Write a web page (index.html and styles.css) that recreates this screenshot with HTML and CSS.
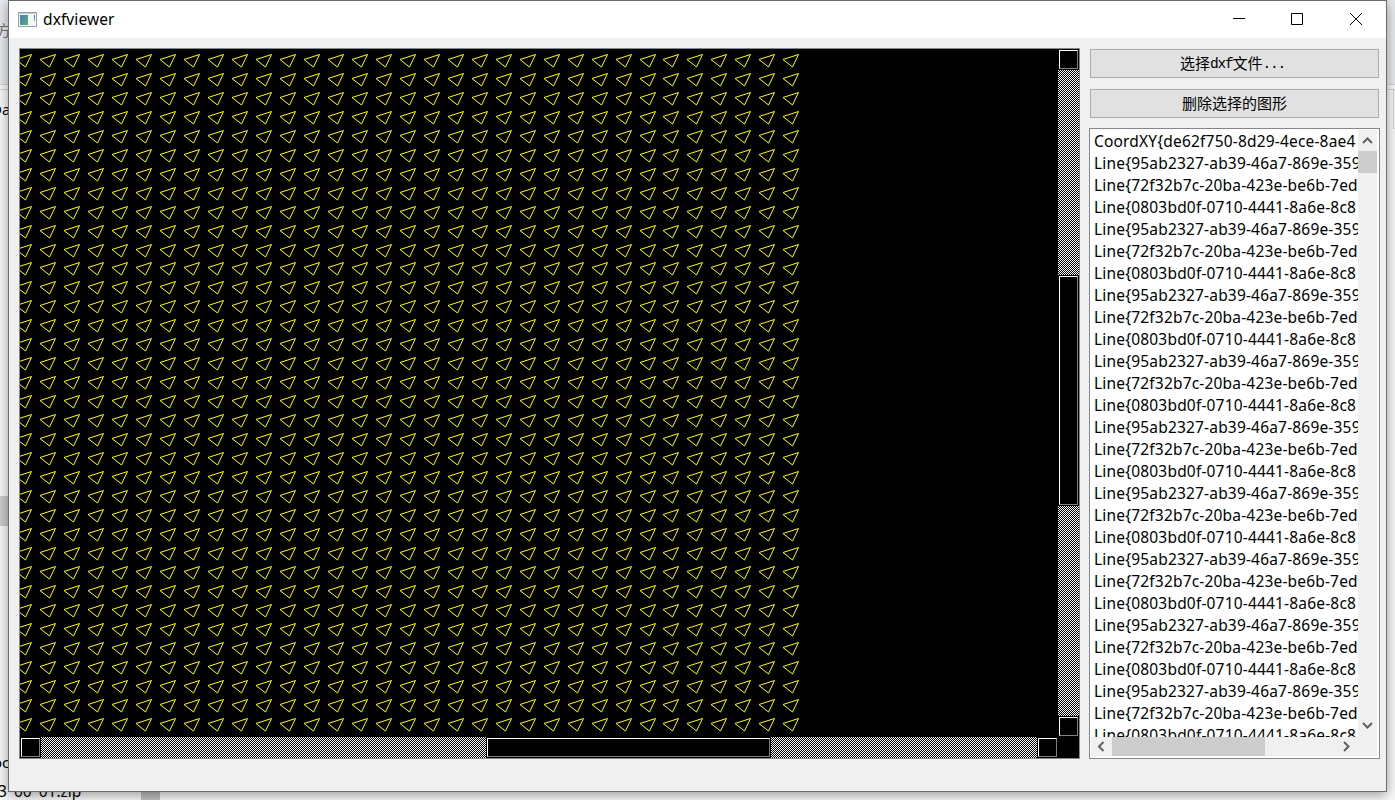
FILE: index.html
```html
<!DOCTYPE html>
<html lang="zh">
<head>
<meta charset="utf-8">
<title>dxfviewer</title>
<link rel="stylesheet" href="styles.css">
</head>
<body>
<div class="desktop">
  <div class="back-top"></div>
  <div class="back-line"></div>
  <div class="back-thumb"></div>
  <div class="back-foot"></div>
  <div class="back-box"></div>
  <span class="back-text t1">方</span>
  <span class="back-text t2">Da</span>
  <span class="back-text t3">oc</span>
  <span class="back-text t4">3 00 01.zip</span>
  <main class="window">
    <header class="titlebar">
      <svg class="app-icon" width="19" height="15" viewBox="0 0 19 15"><defs><linearGradient id="g" x1="0" y1="0" x2="1" y2="1"><stop offset="0" stop-color="#4a7fb0"/><stop offset="1" stop-color="#55b077"/></linearGradient></defs><rect x=".5" y=".5" width="18" height="14" fill="#f4f6f7" stroke="#9aa1a8"/><path d="M1 1.5h17" stroke="#c3cad0"/><rect x="2" y="3" width="8" height="10" fill="url(#g)"/><path d="M16.5 3v3" stroke="#3f7fc0"/><path d="M16.5 6v3" stroke="#62b584"/></svg>
      <h1>dxfviewer</h1>
      <svg class="caption" width="132" height="14" viewBox="0 0 132 14" fill="none" stroke="#000"><path d="M1 6.5h12M59.500 1.500h11v11h-11z"/><path d="M118 1l12 12M130 1l-12 12"/></svg>
    </header>
    <div class="content">
      <section class="view">
        <svg class="drawing" width="1038" height="688"><path id="shapes" fill="none" stroke="#ff0"/></svg>
        <div class="bar vertical"><i class="knob box"></i><i class="knob thumb-v"></i><i class="knob box"></i></div>
        <div class="bar horizontal"><i class="knob box"></i><i class="knob thumb-h"></i><i class="knob box end"></i></div>
        <div class="corner"></div>
      </section>
      <aside class="side">
        <button>选择<span class="half">dxf</span>文件<span class="half">...</span></button>
        <button>删除选择的图形</button>
        <div class="list">
          <ul id="items"></ul>
          <div class="sv"><svg width="19" height="21" viewBox="0 0 19 21"><path d="M5 13l4.500-4.500 4.500 4.500"/></svg><i></i><svg class="end" width="19" height="20" viewBox="0 0 19 20"><path d="M5 6l4.500 4.500 4.500-4.500"/></svg></div>
          <div class="sh"><svg width="21" height="19" viewBox="0 0 21 19"><path d="M12.500 5l-4.500 4.500 4.500 4.500"/></svg><i></i><svg class="end" width="21" height="19" viewBox="0 0 21 19"><path d="M7 5l4.500 4.500-4.500 4.500"/></svg></div>
        </div>
      </aside>
    </div>
  </main>
</div>
<script src="app.js"></script>
</body>
</html>
```
FILE: styles.css
```css
* { box-sizing: border-box; }
body { margin: 0; font-family: "Noto Sans", "Noto Sans CJK SC", sans-serif; font-size: 15px; color: #000; }
.desktop { position: relative; width: 1395px; height: 800px; overflow: hidden; background: #fafafa; }
.back-top { position: absolute; inset: 0 0 auto; height: 84px; background: #e8ebef; }
.back-line { position: absolute; left: 0; top: 84px; width: 100%; height: 6px; border: solid #d5d5d5; border-width: 1px 0; }
.back-thumb { position: absolute; left: 0; top: 496px; width: 9px; height: 30px; background: #cdcdcd; }
.back-foot { position: absolute; left: 141px; top: 780px; width: 19px; height: 20px; background: #c2c2c2; }
.back-box { position: absolute; left: 1393px; top: 90px; width: 10px; height: 39px; border: 1px solid #d0d0d0; }
.back-text { position: absolute; line-height: 20px; white-space: nowrap; }
.t1 { left: -4px; top: 20px; color: #777; }
.t2 { left: -9px; top: 99px; }
.t3 { left: -7px; top: 752px; }
.t4 { left: -2px; top: 781px; font-size: 15.500px; word-spacing: 3px; }
.window { position: relative; margin-left: 8px; width: 1379px; height: 792px; border: 1px solid #6b6c6e; background: #f0f0f0; box-shadow: 0 3px 12px rgba(0,0,0,.4); }
.titlebar { display: flex; align-items: center; height: 37px; padding: 0 22px 0 9px; background: #fff; }
.titlebar h1 { margin: 0 0 2px 6px; font-size: 15.500px; font-weight: 400; line-height: 20px; letter-spacing: .1px; }
.app-icon { margin-bottom: 1px; }
.caption { margin: 0 0 1px auto; }
.content { display: flex; gap: 9px; padding: 10px 6px 0 10px; }
.view { display: grid; grid-template: 688px 21px / 1038px 21px; width: 1061px; height: 711px; border: 1px solid #828790; background: #000; }
.drawing { display: block; }
.bar { display: flex; background: repeating-conic-gradient(#fff 0 25%, #000 0 50%) 0 0 / 2px 2px; }
.vertical { flex-direction: column; justify-content: space-between; }
.knob { display: block; background: #000; border: 1px solid; border-color: #fff #808080 #808080 #fff; box-shadow: 0 0 0 1px #000; }
.box { width: 19px; height: 19px; margin: 1px; }
.thumb-v { width: 19px; height: 229px; margin: 0 1px 6px; }
.thumb-h { width: 283px; height: 19px; margin: 1px 0 1px 446px; }
.box.end { margin-left: auto; }
.corner { background: #000; }
.side { width: 291px; }
.side button { display: flex; align-items: center; justify-content: center; width: 289px; height: 29px; margin: 1px 0 11px 1px; padding: 0 0 2px; background: #e1e1e1; border: 1px solid #adadad; border-radius: 0; font: 15px/20px "Noto Sans CJK SC", sans-serif; font-weight: 400; color: #000; }
.side button:first-child { padding-right: 4px; }
.side button + button { margin-bottom: 10px; }
.half { padding-top: 2px; font: 14.500px/20px "Liberation Mono", monospace; letter-spacing: -1.200px; }
.list { display: grid; grid-template: 607px 19px / 267px 19px; height: 631px; padding: 1px; border: 1px solid #828790; background: #fff; }
.list ul { margin: 0; padding: 0 0 0 3px; list-style: none; overflow: hidden; font-size: 15.500px; letter-spacing: .18px; }
.list li { height: 22px; line-height: 22px; white-space: nowrap; }
.list svg { display: block; fill: none; stroke: #606060; stroke-width: 2; }
.sv { display: flex; flex-direction: column; background: #f0f0f0; }
.sv i { height: 22px; background: #cdcdcd; }
.sh { display: flex; grid-column: 1 / 3; background: #f0f0f0; }
.sh i { width: 153px; background: #cdcdcd; }
.sv .end { margin-top: auto; }
.sh .end { margin-left: auto; margin-right: 19px; }
```
FILE: app.js
```js
let d = "";
for (let r = 0; r < 36; r++) {
  for (let c = 0; c < 33; c++) {
    const x = Math.round(11.3 + c * 23.97) + 0.5;
    const y = Math.round(4.8 + r * 18.97) + 0.5;
    d += `M${x} ${y}l-15.5 5l9.5 7.500z`;
  }
}
document.getElementById("shapes").setAttribute("d", d);

const ids = ["95ab2327-ab39-46a7-869e-359", "72f32b7c-20ba-423e-be6b-7ed", "0803bd0f-0710-4441-8a6e-8c8"];
const list = document.getElementById("items");
const add = text => {
  const li = document.createElement("li");
  li.textContent = text;
  list.append(li);
};
add("CoordXY{de62f750-8d29-4ece-8ae4");
for (let i = 0; i < 27; i++) add("Line{" + ids[i % 3]);
```
